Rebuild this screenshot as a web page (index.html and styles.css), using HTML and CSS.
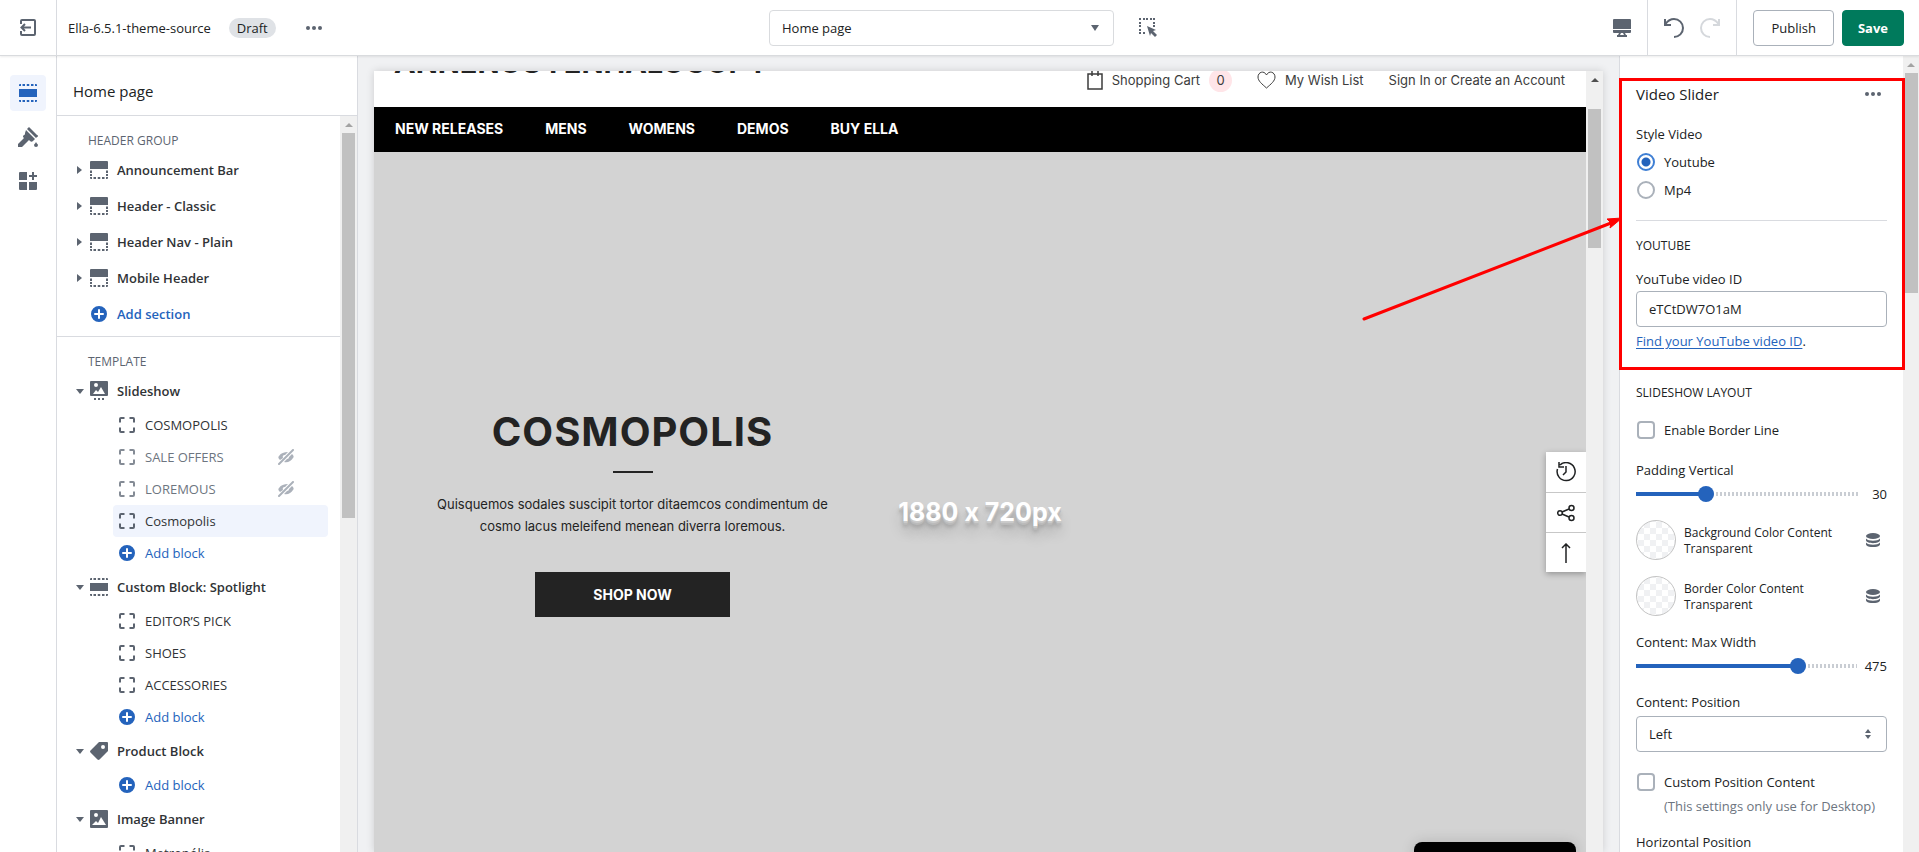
FILE: index.html
```html
<!DOCTYPE html>
<html lang="en">
<head>
<meta charset="UTF-8" />
<meta name="viewport" content="width=device-width, initial-scale=1" />
<title>Ella-6.5.1-theme-source - Home page</title>
<link rel="stylesheet" href="styles.css">
</head>
<body>

<!-- shared icons -->
<svg class="defs" aria-hidden="true">
  <symbol id="i-header" viewBox="0 0 18 18">
    <path d="M1 0h16a1 1 0 0 1 1 1v7H0V1a1 1 0 0 1 1-1z"/>
    <path d="M0 9.500h2V12H0zM16 9.500h2V12h-2zM0 13h2v2H0zM16 13h2v2h-2zM0 16h2v2H1a1 1 0 0 1-1-1zM16 16h2v1a1 1 0 0 1-1 1h-1zM3.500 16H6v2H3.500zM7.750 16h2.500v2h-2.500zM12 16h2.500v2H12z"/>
  </symbol>
  <symbol id="i-section" viewBox="0 0 18 18">
    <path d="M0 5h18v8H0z"/>
    <path d="M1 0h1v2H0V1a1 1 0 0 1 1-1zM3.500 0H6v2H3.500zM7.750 0h2.500v2h-2.500zM12 0h2.500v2H12zM16 0h1a1 1 0 0 1 1 1v1h-2zM0 16h2v2H1a1 1 0 0 1-1-1zM3.500 16H6v2H3.500zM7.750 16h2.500v2h-2.500zM12 16h2.500v2H12zM16 16h2v1a1 1 0 0 1-1 1h-1z"/>
  </symbol>
  <symbol id="i-block" viewBox="0 0 16 16">
    <path d="M1 5.500V2a1 1 0 0 1 1-1h3.500M10.500 1H14a1 1 0 0 1 1 1v3.500M15 10.500V14a1 1 0 0 1-1 1h-3.500M5.500 15H2a1 1 0 0 1-1-1v-3.500" fill="none" stroke="currentColor" stroke-width="2"/>
  </symbol>
  <symbol id="i-plus" viewBox="0 0 16 16">
    <path fill-rule="evenodd" d="M8 0a8 8 0 1 0 0 16A8 8 0 0 0 8 0zM7 4a1 1 0 0 1 2 0v3h3a1 1 0 0 1 0 2H9v3a1 1 0 0 1-2 0V9H4a1 1 0 0 1 0-2h3z"/>
  </symbol>
  <symbol id="i-hidden" viewBox="0 0 16 16">
    <path d="M2 11C0 9 0 8 1 7c2-3 5-4 9-4L7 6a2 2 0 0 0-2 3zM14 5c2 2 2 3 1 4-2 3-5 5-9 4l3-3a2 2 0 0 0 2-2z"/>
    <path d="M1 15 15 1" stroke="currentColor" stroke-width="2" stroke-linecap="round"/>
  </symbol>
  <symbol id="i-slides" viewBox="0 0 18 20">
    <path fill-rule="evenodd" d="M1 0h16a1 1 0 0 1 1 1v13a1 1 0 0 1-1 1H1a1 1 0 0 1-1-1V1a1 1 0 0 1 1-1zM6 2a2 2 0 1 0 0 4 2 2 0 0 0 0-4zM3 13h12l-4-7-3 5-2-2z"/>
    <path d="M4 17h2v2H4zM8 17h2v2H8zM12 17h2v2h-2z"/>
  </symbol>
  <symbol id="i-image" viewBox="0 0 18 18">
    <path fill-rule="evenodd" d="M1 0h16a1 1 0 0 1 1 1v16a1 1 0 0 1-1 1H1a1 1 0 0 1-1-1V1a1 1 0 0 1 1-1zM6 3a2 2 0 1 0 0 4 2 2 0 0 0 0-4zM2 15h14l-5-8-3 6-2-2z"/>
  </symbol>
  <symbol id="i-tag" viewBox="0 0 18 18">
    <path fill-rule="evenodd" d="M9 0h8a1 1 0 0 1 1 1v8l-8.500 8.500a1.500 1.500 0 0 1-2 0l-7-7a1.500 1.500 0 0 1 0-2zM13 3a2 2 0 1 0 0 4 2 2 0 0 0 0-4z"/>
  </symbol>
  <symbol id="i-dots" viewBox="0 0 16 4">
    <circle cx="2" cy="2" r="2"/><circle cx="8" cy="2" r="2"/><circle cx="14" cy="2" r="2"/>
  </symbol>
  <symbol id="i-stack" viewBox="0 0 14 14">
    <ellipse cx="7" cy="3" rx="7" ry="3"/>
    <path d="M0 5.500c2 3 12 3 14 0v2c-1 3.500-13 3.500-14 0zM0 9.500c2 3 12 3 14 0v2c-1 3.500-13 3.500-14 0z"/>
  </symbol>
</svg>

<header class="topbar">
  <div class="theme">
    <button class="exit" aria-label="Exit">
      <svg width="18" height="18" viewBox="0 0 18 18" fill="none" stroke="currentColor" stroke-width="2"><path d="M2 5V2a1 1 0 0 1 1-1h12a1 1 0 0 1 1 1v13a1 1 0 0 1-1 1H3a1 1 0 0 1-1-1v-3M12 8.500H3M6 5 2.500 8.500 6 12"/></svg>
    </button>
    <span>Ella-6.5.1-theme-source</span>
    <span class="draft">Draft</span>
    <button class="dots" aria-label="More actions"><svg width="16" height="4"><use href="#i-dots"/></svg></button>
  </div>
  <div class="page-picker">
    <select class="page-select" aria-label="Page"><option>Home page</option></select>
    <button aria-label="Inspector">
      <svg width="18" height="19" viewBox="0 0 18 19"><path d="M0 0h2v2H0zM4 0h2v2H4zM7 0h2v2H7zM11 0h2v2h-2zM14 0h2v2h-2zM14 4h2v2h-2zM14 7h2v2h-2zM0 4h2v2H0zM0 7h2v2H0zM0 11h2v2H0zM0 14h2v2H0zM4 14h2v2H4zM8 8l9 4-3 1 4 4-2 2-4-4-1 3z"/></svg>
    </button>
  </div>
  <div class="actions">
    <div class="device">
      <button aria-label="Desktop view">
        <svg width="18" height="18" viewBox="0 0 18 18"><path d="M1 0h16a1 1 0 0 1 1 1v9H0V1a1 1 0 0 1 1-1zM0 11h18v2a1 1 0 0 1-1 1h-5l1 2h1v2H4v-2h1l1-2H1a1 1 0 0 1-1-1zM8 14l-1 2h4l-1-2z" fill-rule="evenodd"/></svg>
      </button>
    </div>
    <div class="history">
      <button aria-label="Undo">
        <svg width="20" height="20" viewBox="0 0 20 20" fill="none" stroke="currentColor" stroke-width="2"><path d="M1 1v6h6M1.500 6C4 2.500 7 1 10 1a9 9 0 0 1 0 18"/></svg>
      </button>
      <button class="off" aria-label="Redo">
        <svg width="20" height="20" viewBox="0 0 20 20" fill="none" stroke="currentColor" stroke-width="2"><path d="M19 1v6h-6M18.500 6C16 2.500 13 1 10 1a9 9 0 0 0 0 18"/></svg>
      </button>
    </div>
    <div class="publish-group">
      <button class="btn">Publish</button>
      <button class="btn save">Save</button>
    </div>
  </div>
</header>

<div class="editor">
  <nav class="rail">
    <button class="active" aria-label="Sections"><svg width="18" height="18"><use href="#i-section"/></svg></button>
    <button aria-label="Theme settings">
      <svg width="20" height="20" viewBox="0 0 20 20"><path d="M11 0l8 8a1 1 0 0 1 0 2l-1 1-9-9 1-1zM8 3l9 9-2 2c-1 1-2 1-3 0l-1-1-7 7H0v-3l6-6-1-1c0-1 0-1 1-2 1 0 1-1 1-2zM18 15c1 2 2 2 2 3a2 2 0 0 1-4 0c0-1 1-1 2-3z"/></svg>
    </button>
    <button aria-label="Apps">
      <svg width="18" height="18" viewBox="0 0 18 18"><path d="M1 0h7v8H0V1a1 1 0 0 1 1-1zM0 10h8v8H1a1 1 0 0 1-1-1zM10 10h8v7a1 1 0 0 1-1 1h-7zM13 0h2v3h3v2h-3v3h-2V5h-3V3h3z"/></svg>
    </button>
  </nav>

  <aside class="sidebar">
    <h2>Home page</h2>
    <div class="scroller">
      <div class="tree">
        <section class="group">
          <h3>HEADER GROUP</h3>
          <button class="row"><i class="caret right"></i><svg width="18" height="18"><use href="#i-header"/></svg>Announcement Bar</button>
          <button class="row"><i class="caret right"></i><svg width="18" height="18"><use href="#i-header"/></svg>Header - Classic</button>
          <button class="row"><i class="caret right"></i><svg width="18" height="18"><use href="#i-header"/></svg>Header Nav - Plain</button>
          <button class="row"><i class="caret right"></i><svg width="18" height="18"><use href="#i-header"/></svg>Mobile Header</button>
          <button class="row add"><i class="caret"></i><svg width="18" height="16"><use href="#i-plus"/></svg>Add section</button>
        </section>
        <section class="group">
          <h3>TEMPLATE</h3>
          <button class="row"><i class="caret down"></i><svg width="18" height="20"><use href="#i-slides"/></svg>Slideshow</button>
          <button class="block"><svg width="16" height="16"><use href="#i-block"/></svg>COSMOPOLIS</button>
          <button class="block muted"><svg width="16" height="16"><use href="#i-block"/></svg>SALE OFFERS<svg class="eye" width="16" height="16"><use href="#i-hidden"/></svg></button>
          <button class="block muted"><svg width="16" height="16"><use href="#i-block"/></svg>LOREMOUS<svg class="eye" width="16" height="16"><use href="#i-hidden"/></svg></button>
          <button class="block selected"><svg width="16" height="16"><use href="#i-block"/></svg>Cosmopolis</button>
          <button class="block add"><svg width="16" height="16"><use href="#i-plus"/></svg>Add block</button>
          <button class="row"><i class="caret down"></i><svg width="18" height="18"><use href="#i-section"/></svg>Custom Block: Spotlight</button>
          <button class="block"><svg width="16" height="16"><use href="#i-block"/></svg>EDITOR’S PICK</button>
          <button class="block"><svg width="16" height="16"><use href="#i-block"/></svg>SHOES</button>
          <button class="block"><svg width="16" height="16"><use href="#i-block"/></svg>ACCESSORIES</button>
          <button class="block add"><svg width="16" height="16"><use href="#i-plus"/></svg>Add block</button>
          <button class="row"><i class="caret down"></i><svg width="18" height="18"><use href="#i-tag"/></svg>Product Block</button>
          <button class="block add"><svg width="16" height="16"><use href="#i-plus"/></svg>Add block</button>
          <button class="row"><i class="caret down"></i><svg width="18" height="18"><use href="#i-image"/></svg>Image Banner</button>
          <button class="block"><svg width="16" height="16"><use href="#i-block"/></svg>Metropólis</button>
        </section>
      </div>
      <div class="scrollbar tree-bar"><i></i><b></b></div>
    </div>
  </aside>

  <main class="canvas">
    <div class="preview">
      <div class="shop">
        <div class="shop-top">
          <a class="logo" href="#">ANNENGUYENHALOCOPY</a>
          <div class="shop-links">
            <a href="#"><svg width="16" height="20" viewBox="0 0 16 20" fill="none" stroke="currentColor"><path d="M1 4h14v15H1zM5 6V1M11 6V1" stroke-width="1.500"/></svg>Shopping Cart <span class="count">0</span></a>
            <a href="#"><svg width="19" height="18" viewBox="0 0 19 18" fill="none" stroke="currentColor"><path d="M9.500 17C5 13 1 10 1 6c0-5 6-7 8.500-2C12 -1 18 1 18 6c0 4-4 7-8.500 11z"/></svg>My Wish List</a>
            <a href="#">Sign In or Create an Account</a>
          </div>
        </div>
        <nav class="shop-nav">
          <a href="#">NEW RELEASES</a>
          <a href="#">MENS</a>
          <a href="#">WOMENS</a>
          <a href="#">DEMOS</a>
          <a href="#">BUY ELLA</a>
        </nav>
        <div class="hero">
          <div class="hero-text">
            <h1>COSMOPOLIS</h1>
            <hr>
            <p>Quisquemos sodales suscipit tortor ditaemcos condimentum de<br>cosmo lacus meleifend menean diverra loremous.</p>
            <a class="shop-now" href="#">SHOP NOW</a>
          </div>
          <div class="size-label">1880 x 720px</div>
        </div>
        <div class="side-tools">
          <button aria-label="Recently viewed"><svg width="20" height="20" viewBox="0 0 20 20" fill="none" stroke="currentColor" stroke-width="1.500"><path d="M4 3a9 9 0 1 1-2.500 4M3 0v5h5M10 4v6l-3 3"/></svg></button>
          <button aria-label="Share"><svg width="18" height="18" viewBox="0 0 18 18" fill="none" stroke="currentColor" stroke-width="1.500"><circle cx="3" cy="9" r="2.300"/><circle cx="14.500" cy="4" r="2.500"/><circle cx="14.500" cy="14" r="2.500"/><path d="M5 8l7-3M5 10l7 3"/></svg></button>
          <button aria-label="Back to top"><svg width="10" height="20" viewBox="0 0 10 20" fill="none" stroke="currentColor" stroke-width="1.500"><path d="M5 20V1M1 5l4-4 4 4"/></svg></button>
        </div>
        <div class="toast"></div>
      </div>
      <div class="scrollbar shop-bar"><i></i><b></b></div>
    </div>
  </main>

  <aside class="settings">
    <form class="fields">
      <div class="title">
        <h2>Video Slider</h2>
        <button type="button" aria-label="More"><svg width="16" height="4"><use href="#i-dots"/></svg></button>
      </div>
      <fieldset>
        <legend>Style Video</legend>
        <label class="choice"><input type="radio" name="style" checked>Youtube</label>
        <label class="choice"><input type="radio" name="style">Mp4</label>
      </fieldset>
      <section class="youtube">
        <h3>YOUTUBE</h3>
        <label for="video">YouTube video ID</label>
        <input type="text" id="video" value="eTCtDW7O1aM">
        <div class="hint"><a href="#">Find your YouTube video ID</a>.</div>
      </section>
      <section class="layout">
        <h3>SLIDESHOW LAYOUT</h3>
        <label class="choice"><input type="checkbox">Enable Border Line</label>
        <div class="field">
          <label for="padding">Padding Vertical</label>
          <div class="slider"><input type="range" id="padding" min="0" max="100" value="30" style="--fill: 31%"><output for="padding">30</output></div>
        </div>
        <div class="color">
          <button type="button" class="swatch" aria-label="Background Color Content"></button>
          <div><strong>Background Color Content</strong><span>Transparent</span></div>
          <svg width="14" height="14"><use href="#i-stack"/></svg>
        </div>
        <div class="color">
          <button type="button" class="swatch" aria-label="Border Color Content"></button>
          <div><strong>Border Color Content</strong><span>Transparent</span></div>
          <svg width="14" height="14"><use href="#i-stack"/></svg>
        </div>
        <div class="field">
          <label for="maxwidth">Content: Max Width</label>
          <div class="slider"><input type="range" id="maxwidth" min="100" max="600" value="475" style="--fill: 73%"><output for="maxwidth">475</output></div>
        </div>
        <div class="field">
          <label for="position">Content: Position</label>
          <select id="position"><option>Left</option></select>
        </div>
        <label class="choice"><input type="checkbox" aria-describedby="custom-help">Custom Position Content</label>
        <p class="help" id="custom-help">(This settings only use for Desktop)</p>
        <label for="horizontal">Horizontal Position</label>
        <input type="text" id="horizontal">
      </section>
    </form>
    <div class="scrollbar settings-bar"><i></i><b></b></div>

    <!-- callout over the youtube options -->
    <div class="callout"></div>
    <svg class="arrow" width="262" height="108" viewBox="0 0 262 108"><path d="M3 105 250 9" stroke="#f00" stroke-width="3" stroke-linecap="round"/><path d="M261 4 246 5l4 4-1 5z" fill="#f00" stroke="#f00"/></svg>
  </aside>
</div>

</body>
</html>
```

FILE: styles.css
```css
* {
  box-sizing: border-box;
}
body {
  margin: 0;
  height: 100vh;
  display: flex;
  flex-direction: column;
  overflow: hidden;
  font: 13px/20px "Open Sans", "Noto Sans", sans-serif;
  color: #202223;
  background: #fff;
}
button, input, select {
  font: inherit;
  color: inherit;
}
button {
  border: 0;
  padding: 0;
  background: none;
  cursor: pointer;
}
svg {
  display: block;
  flex: none;
  fill: currentColor;
}
svg[fill="none"] {
  fill: none;
}
.defs {
  position: absolute;
  width: 0;
  height: 0;
}
h1, h2, h3, p {
  margin: 0;
}
h2 {
  font-size: 15px;
  font-weight: 500;
}
h3 {
  font-size: 12px;
  font-weight: 400;
}

/* top bar */
.topbar {
  display: grid;
  grid-template-columns: 1fr auto 1fr;
  flex: none;
  height: 56px;
  border-bottom: 1px solid #d9dbde;
  box-shadow: 0 1px 2px rgba(0,0,0,0.08);
  position: relative;
  z-index: 2;
  background: #fff;
}
.topbar button {
  color: #5c6470;
}
.exit {
  display: flex;
  align-items: center;
  justify-content: center;
  align-self: stretch;
  width: 57px;
  margin-right: 11px;
  border-right: 1px solid #d9dbe0;
}
.theme {
  display: flex;
  align-items: center;
}
.draft {
  margin: 0 30px 0 18px;
  padding: 0 8px;
  border-radius: 10px;
  background: #dfe2e6;
}
.page-picker {
  display: flex;
  align-items: center;
  gap: 25px;
  padding-left: 7px;
}
.page-select {
  appearance: none;
  width: 345px;
  height: 36px;
  padding: 0 12px;
  border: 1px solid #d9dbde;
  border-radius: 4px;
  background: #fff url('data:image/svg+xml,<svg xmlns="http://www.w3.org/2000/svg" width="8" height="6"><path d="M0 0h8L4 6z" fill="%235c6470"/></svg>') no-repeat right 14px center;
}
.actions {
  display: flex;
  justify-content: flex-end;
}
.device, .history {
  display: flex;
  align-items: center;
  gap: 16px;
  padding: 0 16px;
  border-right: 1px solid #d9dbe0;
}
.topbar .off {
  color: #d5d8dc;
}
.publish-group {
  display: flex;
  align-items: center;
  gap: 8px;
  padding: 0 15px 0 16px;
}
.topbar .btn {
  height: 36px;
  padding: 0 17px;
  border: 1px solid #aab1ba;
  border-radius: 4px;
  color: #202223;
  font-weight: 500;
}
.topbar .save {
  padding: 0 15px;
  background: #007a5c;
  border-color: #007a5c;
  color: #fff;
  font-weight: 700;
}

.editor {
  flex: 1;
  min-height: 0;
  display: flex;
}

/* left side */
.rail {
  width: 57px;
  flex: none;
  display: flex;
  flex-direction: column;
  align-items: center;
  gap: 8px;
  padding-top: 19px;
  border-right: 1px solid #d9dbe0;
}
.rail button {
  display: flex;
  align-items: center;
  justify-content: center;
  width: 36px;
  height: 36px;
  border-radius: 4px;
  color: #5c6470;
}
.rail .active {
  background: #f0f4fd;
  color: #2463bc;
}
.sidebar {
  width: 301px;
  flex: none;
  display: flex;
  flex-direction: column;
  border-right: 1px solid #d9dbe0;
}
.sidebar h2 {
  padding: 25px 16px 14px;
  border-bottom: 1px solid #d9dbe0;
}
.scroller {
  flex: 1;
  min-height: 0;
  display: flex;
}
.tree {
  flex: 1;
  overflow: hidden;
}
.group {
  padding: 12px 0 4px;
  border-bottom: 1px solid #d9dbe0;
}
.group h3 {
  padding: 2px 0 0 31px;
  line-height: 22px;
  color: #5c6470;
}
.row {
  display: flex;
  align-items: center;
  width: 100%;
  height: 36px;
  padding-left: 18px;
  font-weight: 600;
  color: #303336;
}
.row svg, .block svg {
  margin-right: 9px;
  color: #5c6470;
}
.caret {
  width: 9px;
  margin-right: 6px;
  display: flex;
  justify-content: center;
}
.caret.right::before {
  content: "";
  border: 4px solid transparent;
  border-left: 5px solid #5c6470;
  border-right: 0;
}
.caret.down::before {
  content: "";
  border: 4px solid transparent;
  border-top: 5px solid #5c6470;
  border-bottom: 0;
}
.block {
  display: flex;
  align-items: center;
  width: 215px;
  height: 32px;
  margin-left: 56px;
  padding: 0 34px 0 6px;
  border-radius: 4px;
  color: #303336;
}
.block svg {
  margin-right: 10px;
}
.muted {
  color: #6d7580;
}
.muted svg {
  color: #848b95;
}
.block .eye {
  margin: 0 0 0 auto;
  color: #abb1ba;
}
.selected {
  background: #f0f4fd;
}
.add, .add svg {
  color: #2463bc;
}

/* drawn scrollbars */
.scrollbar {
  flex: none;
  width: 17px;
  display: flex;
  flex-direction: column;
  align-items: center;
  background: #f0f0f0;
}
.scrollbar i {
  height: 17px;
  display: flex;
  align-items: center;
}
.scrollbar i::before {
  content: "";
  border: 4px solid transparent;
  border-top: 0;
  border-bottom-color: #a3a3a3;
}
.scrollbar b {
  width: 13px;
  background: #c1c1c1;
}
.tree-bar b {
  height: 385px;
}
.shop-bar i::before {
  border-bottom-color: #505050;
}
.shop-bar b {
  height: 139px;
  margin-top: 21px;
}
.settings-bar {
  width: 16px;
}
.settings-bar b {
  height: 220px;
}

/* store preview */
.canvas {
  flex: 1;
  min-width: 0;
  display: flex;
  padding: 15px 16px 0;
  background: #f0f1f3;
}
.preview {
  flex: 1;
  min-width: 0;
  display: flex;
  box-shadow: 0 0 8px rgba(0,0,0,0.15);
}
.shop {
  flex: 1;
  min-width: 0;
  position: relative;
  display: flex;
  flex-direction: column;
  overflow: hidden;
  background: #fff;
  font-family: Inter, sans-serif;
  font-feature-settings: "calt" 0;
}
.shop a {
  color: inherit;
  text-decoration: none;
}
.shop-top {
  display: flex;
  justify-content: space-between;
  height: 36px;
  padding: 0 21px 0 20px;
}
.shop .logo {
  margin-top: -28px;
  font-size: 29px;
  line-height: 40px;
  font-weight: 700;
  color: #232323;
}
.shop-links {
  display: flex;
  gap: 25px;
  height: 18px;
  color: #3c3c3c;
}
.shop-links a {
  display: flex;
  align-items: center;
}
.shop-links svg {
  margin-right: 9px;
}
.count {
  width: 23px;
  height: 23px;
  margin-left: 9px;
  border-radius: 50%;
  background: #ffe5e8;
  text-align: center;
  line-height: 23px;
}
.shop-nav {
  display: flex;
  align-items: center;
  gap: 42px;
  height: 45px;
  padding: 0 21px 2px;
  background: #000;
  color: #fff;
  font-size: 14px;
  font-weight: 700;
}
.hero {
  flex: 1;
  position: relative;
  padding: 254px 21px 0;
  background: #d3d3d3;
}
.hero-text {
  width: 475px;
  text-align: center;
  color: #232323;
}
.hero h1 {
  font-size: 40px;
  line-height: 52px;
  letter-spacing: 1px;
}
.hero hr {
  width: 40px;
  height: 2px;
  margin: 13px auto 20px;
  border: 0;
  background: #232323;
}
.hero p {
  line-height: 22px;
}
.hero .shop-now {
  display: inline-block;
  width: 195px;
  margin-top: 35px;
  background: #232323;
  color: #fff;
  font-size: 14px;
  font-weight: 700;
  line-height: 45px;
}
.size-label {
  position: absolute;
  top: 340px;
  left: 0;
  right: 0;
  text-align: center;
  font-size: 25px;
  line-height: 40px;
  font-weight: 700;
  color: #fff;
  text-shadow: 0 1px 0 #ccc, 0 2px 0 #c9c9c9, 0 3px 0 #bbb, 0 4px 0 #b9b9b9, 0 6px 4px rgba(0,0,0,0.2), 0 12px 14px rgba(0,0,0,0.2);
}
.side-tools {
  position: absolute;
  right: 0;
  top: 381px;
  width: 40px;
  background: #fff;
  box-shadow: 0 2px 6px rgba(0,0,0,0.3);
}
.side-tools button {
  display: flex;
  align-items: center;
  justify-content: center;
  width: 40px;
  height: 40px;
}
.side-tools button + button {
  border-top: 1px solid #c7c7c7;
}
.toast {
  position: absolute;
  right: 10px;
  bottom: -40px;
  width: 162px;
  height: 50px;
  border-radius: 8px;
  background: #000;
  box-shadow: 0 0 14px rgba(0,0,0,0.15);
}

/* settings panel */
.settings {
  width: 300px;
  flex: none;
  position: relative;
  display: flex;
  border-left: 1px solid #d9dbe0;
}
.fields {
  flex: 1;
  min-width: 0;
  padding: 28px 16px 0;
  overflow: hidden;
}
.fields label, .fields legend {
  display: block;
}
.title {
  display: flex;
  align-items: center;
  justify-content: space-between;
  padding-right: 6px;
  color: #202223;
}
.title button, .color svg {
  color: #5c6470;
}
.fields fieldset {
  margin: 0;
  padding: 20px 0 16px;
  border: 0;
  border-bottom: 1px solid #d9dbe0;
}
.fields legend {
  float: left;
  width: 100%;
  padding: 0 0 4px;
}
.fields .choice {
  display: flex;
  align-items: center;
  gap: 9px;
  clear: both;
  height: 28px;
}
.choice input {
  appearance: none;
  flex: none;
  width: 18px;
  height: 18px;
  margin: 0 0 0 1px;
  border: 2px solid #aab1ba;
  border-radius: 4px;
  background: #fff;
}
.choice input[type="radio"] {
  border-radius: 50%;
}
.choice input:checked {
  border-color: #3f7fd4;
  background: radial-gradient(#2463bc 4px, #fff 5px);
}
.youtube {
  padding: 15px 0 42px;
}
.youtube h3 {
  margin-bottom: 13px;
}
.fields input[type="text"], .fields select {
  display: block;
  appearance: none;
  width: 100%;
  height: 36px;
  padding: 0 12px;
  border: 1px solid #aab1ba;
  border-radius: 4px;
  background: #fff;
}
.youtube input {
  margin: 2px 0 4px;
}
.hint a {
  color: #2463bc;
  text-underline-offset: 2px;
}
.layout h3 {
  margin: -10px 0 13px;
}
.field {
  margin-top: 16px;
}
.field + .field {
  margin-top: 12px;
}
.slider {
  display: flex;
  align-items: center;
  gap: 8px;
  height: 28px;
}
.slider input {
  appearance: none;
  flex: 1;
  min-width: 0;
  height: 16px;
  margin: 0;
  background:
    linear-gradient(#2463bc, #2463bc) left center / var(--fill) 4px no-repeat,
    repeating-linear-gradient(90deg, #c9cdd3 0 2px, #fff 2px 4px) left center / 100% 4px no-repeat;
}
.slider input::-webkit-slider-thumb {
  appearance: none;
  width: 16px;
  height: 16px;
  border-radius: 50%;
  background: #2463bc;
}
.slider output {
  min-width: 20px;
  text-align: right;
}
.color {
  display: flex;
  align-items: center;
  height: 40px;
  margin: 12px 0 16px;
  padding-right: 7px;
  font-size: 12px;
  line-height: 16px;
}
.color div {
  flex: 1;
  margin-left: 8px;
  padding-top: 2px;
}
.color strong, .color span {
  display: block;
}
.color strong {
  font-weight: 500;
}
.swatch {
  width: 40px;
  height: 40px;
  border: 1px solid #c4c4c4;
  border-radius: 50%;
  background: repeating-conic-gradient(#f0f1f3 0 25%, #fff 0 50%) center / 12px 12px;
}
.fields select {
  margin: 4px 0 16px;
  background: #fff url('data:image/svg+xml,<svg xmlns="http://www.w3.org/2000/svg" width="8" height="10"><path d="M1 4 4 0l3 4zM1 6h6l-3 4z" fill="%235c6470"/></svg>') no-repeat right 14px center;
}
.help {
  margin: 0 -8px 16px 28px;
  color: #6d7580;
}

.callout {
  position: absolute;
  top: 22px;
  left: -1px;
  right: 14px;
  height: 292px;
  border: 3px solid #f00;
}
.arrow {
  position: absolute;
  right: 296px;
  top: 158px;
}
```
